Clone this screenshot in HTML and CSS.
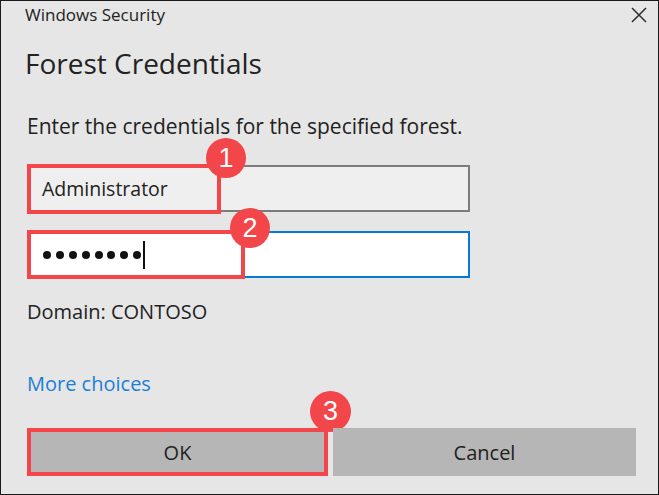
FILE: index.html
```html
<!DOCTYPE html>
<html lang="en">
<head>
<meta charset="utf-8">
<title>Windows Security</title>
<link rel="stylesheet" href="styles.css">
</head>
<body>
<div class="window">
  <div class="titlebar">
    <span class="app-title">Windows Security</span>
    <span class="close" aria-label="Close">
      <svg width="16" height="16" viewBox="0 0 16 16"><path d="M1 1 L15 15 M15 1 L1 15" stroke="#333" stroke-width="1.6" fill="none"/></svg>
    </span>
  </div>
  <div class="content">
    <h1 class="heading">Forest Credentials</h1>
    <p class="desc">Enter the credentials for the specified forest.</p>
    <div class="field field-user">
      <span class="field-text">Administrator</span>
      <span class="mark mark-1"></span>
      <span class="badge badge-1">1</span>
    </div>
    <div class="field field-pass">
      <span class="dots"><i></i><i></i><i></i><i></i><i></i><i></i><i></i><i></i></span><span class="caret"></span>
      <span class="mark mark-2"></span>
      <span class="badge badge-2">2</span>
    </div>
    <p class="domain">Domain: CONTOSO</p>
    <a class="more" href="#">More choices</a>
    <div class="buttons">
      <div class="btn btn-ok">OK
        <span class="mark mark-3"></span>
        <span class="badge badge-3">3</span>
      </div>
      <div class="btn">Cancel</div>
    </div>
  </div>
</div>
</body>
</html>
```

FILE: styles.css
```css
* { box-sizing: border-box; }
html, body { margin: 0; padding: 0; }
body { background: #e6e6e6; }
.window {
  width: 659px;
  height: 495px;
  border: 1px solid #1a1a1a;
  background: #e6e6e6;
  font-family: "Open Sans", "Noto Sans", sans-serif;
  color: #1f1f1f;
}
.titlebar {
  height: 32px;
  display: flex;
  align-items: flex-start;
  justify-content: space-between;
  padding: 3px 11px 0 24px;
}
.app-title {
  font-size: 17px;
  line-height: 22px;
  color: #222;
}
.close {
  display: flex;
  padding-top: 3px;
}
.content {
  padding: 0 22px 0 26px;
}
.heading {
  margin: 12px 0 0 -2px;
  font-size: 28px;
  line-height: 36px;
  font-weight: 400;
  color: #222;
}
.desc {
  margin: 33px 0 0 0;
  font-size: 21px;
  line-height: 24px;
  color: #222;
}
.field {
  position: relative;
  width: 443px;
  height: 47px;
  border: 2px solid #7c7c7c;
  background: #efefef;
  display: flex;
  align-items: center;
  padding-left: 13px;
}
.field-user { margin-top: 27px; }
.field-pass {
  margin-top: 19px;
  border-color: #0a78d7;
  background: #fff;
  padding-left: 14px;
}
.field-text {
  font-size: 19.5px;
  color: #222;
}
.dots { display: flex; gap: 4.9px; }
.dots i {
  display: block;
  width: 8px;
  height: 8px;
  border-radius: 50%;
  background: #111;
}
.caret {
  display: block;
  width: 2px;
  height: 28px;
  background: #111;
  margin-left: 2px;
}
.mark {
  position: absolute;
  border: 4px solid #f2464a;
  pointer-events: none;
}
.mark-1 { left: -2px; top: -3px; width: 194px; height: 50px; }
.mark-2 { left: -2px; top: -3px; width: 218px; height: 49px; }
.mark-3 { left: 0; top: 0; right: 0; bottom: 0; }
.badge {
  position: absolute;
  width: 40px;
  height: 40px;
  border-radius: 50%;
  background: #f2464a;
  color: #fff;
  font-size: 27px;
  line-height: 40px;
  text-align: center;
  font-family: "Liberation Sans", Arial, sans-serif;
}
.badge-1 { left: 177px; top: -29px; }
.badge-2 { left: 201px; top: -25px; }
.badge-3 { left: 283px; top: -37px; width: 41px; height: 41px; line-height: 41px; }
.domain {
  margin: 22px 0 0 0;
  font-size: 20px;
  line-height: 24px;
  color: #222;
}
.more {
  display: block;
  margin-top: 48px;
  font-size: 20px;
  line-height: 24px;
  color: #1a7fd6;
  text-decoration: none;
}
.buttons {
  display: flex;
  gap: 5px;
  margin-top: 32px;
}
.btn {
  position: relative;
  flex: 1;
  height: 48px;
  background: #b6b6b6;
  display: flex;
  align-items: center;
  justify-content: center;
  font-size: 20px;
  color: #222;
}
.btn-ok { flex: 0 0 301px; }
```
